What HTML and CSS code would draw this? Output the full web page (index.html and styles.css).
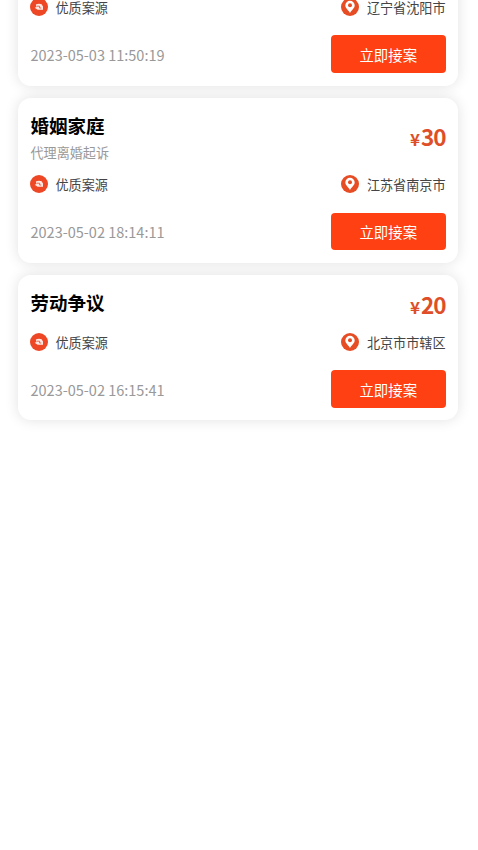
FILE: index.html
```html
<!DOCTYPE html>
<html lang="zh-CN">
<head>
<meta charset="utf-8">
<title>案源列表</title>
<link rel="stylesheet" href="styles.css">
</head>
<body>
<svg class="defs" aria-hidden="true">
  <symbol id="quality" viewBox="0 0 18 18">
    <circle cx="9" cy="9" r="9" fill="#ee4725"/>
    <path d="M5.8 6.4Q9 5.2 11.6 6.3L13 8.6V11.7H7.6L4.7 9.8L6.6 9Z" fill="#fff" fill-opacity=".88"/>
    <path d="M7 8.2H9.6V10H11.2" fill="none" stroke="#ee4725" stroke-width=".8"/>
  </symbol>
  <symbol id="pin" viewBox="0 0 18 18">
    <circle cx="9" cy="9" r="9" fill="#e64d24"/>
    <path d="M9 14.9C7.6 12.4 4.3 10.2 4.3 7.5a4.7 4.7 0 0 1 9.4 0C13.7 10.2 10.4 12.4 9 14.9Z" fill="#fff"/>
    <circle cx="9" cy="7.3" r="2" fill="#e64d24"/>
  </symbol>
</svg>
<main class="list">
  <article class="card">
    <header class="head">
      <div><h2 class="title">&nbsp;</h2><p class="desc">&nbsp;</p></div>
    </header>
    <div class="row tags">
      <span class="tag"><svg class="icon"><use href="#quality"/></svg><span class="label">优质案源</span></span>
      <span class="tag"><svg class="icon"><use href="#pin"/></svg><span class="label">辽宁省沈阳市</span></span>
    </div>
    <div class="row foot"><time class="time">2023-05-03 11:50:19</time><button class="btn">立即接案</button></div>
  </article>
  <article class="card">
    <header class="head">
      <div><h2 class="title">婚姻家庭</h2><p class="desc">代理离婚起诉</p></div>
      <div class="price"><span class="yen">¥</span>30</div>
    </header>
    <div class="row tags">
      <span class="tag"><svg class="icon"><use href="#quality"/></svg><span class="label">优质案源</span></span>
      <span class="tag"><svg class="icon"><use href="#pin"/></svg><span class="label">江苏省南京市</span></span>
    </div>
    <div class="row foot"><time class="time">2023-05-02 18:14:11</time><button class="btn">立即接案</button></div>
  </article>
  <article class="card">
    <header class="head">
      <div><h2 class="title">劳动争议</h2></div>
      <div class="price"><span class="yen">¥</span>20</div>
    </header>
    <div class="row tags">
      <span class="tag"><svg class="icon"><use href="#quality"/></svg><span class="label">优质案源</span></span>
      <span class="tag"><svg class="icon"><use href="#pin"/></svg><span class="label">北京市市辖区</span></span>
    </div>
    <div class="row foot"><time class="time">2023-05-02 16:15:41</time><button class="btn">立即接案</button></div>
  </article>
</main>
</body>
</html>
```
FILE: styles.css
```css
* { box-sizing: border-box; margin: 0; padding: 0; }
body {
  height: 850px;
  overflow: hidden;
  background: #fff;
  font-family: "Noto Sans CJK SC", sans-serif;
}
.defs { display: none; }
/* The list is scrolled so that the first card is partly off screen. */
.list {
  display: flex;
  flex-direction: column;
  gap: 12.5px;
  padding: 0 20px 0 18px;
  margin-top: -79.2px;
}
.card {
  padding: 12.2px 12.5px 12.3px;
  border-radius: 13px;
  background: #fff;
  box-shadow: 0 0 14px rgba(0, 0, 0, .12);
}
.card:not(:last-child) { height: 164.7px; }
.head { display: flex; justify-content: space-between; align-items: center; }
.title { font-size: 18.5px; line-height: 31px; font-weight: 700; color: #000; }
.desc { padding-top: 2.5px; font-size: 13.1px; line-height: 17px; color: #999; }
.price {
  display: flex;
  align-items: baseline;
  padding-top: 2px;
  font-size: 22.5px;
  line-height: 28px;
  font-weight: 700;
  letter-spacing: -1px;
  color: #de4f28;
}
.yen { font-size: 17px; line-height: 1; margin-right: 2px; }
.row { display: flex; justify-content: space-between; align-items: center; }
.tags { margin-top: 14.7px; height: 18px; }
.tag { display: flex; align-items: center; gap: 7.5px; font-size: 13.1px; line-height: 18px; color: #444; }
.label { padding-top: 1.5px; }
.icon { width: 18px; height: 18px; margin-left: -.5px; }
.foot { margin-top: 19.2px; }
.time { font-size: 14.5px; color: #999; }
.btn {
  width: 114.5px;
  height: 37.5px;
  border: 0;
  border-radius: 4px;
  background: #ff4012;
  color: #fff;
  font: 14.4px "Noto Sans CJK SC", sans-serif;
}
```
